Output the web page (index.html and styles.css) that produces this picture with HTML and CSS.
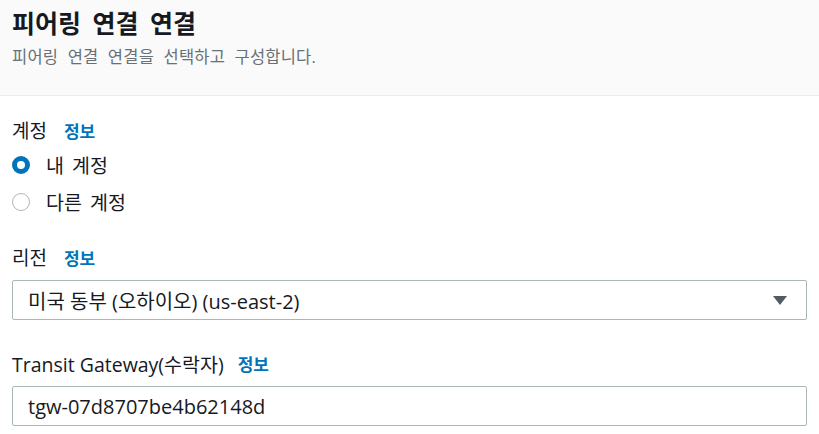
FILE: index.html
```html
<!DOCTYPE html>
<html lang="ko">
<head>
    <meta charset="UTF-8">
    <title>피어링 연결 연결</title>
    <link rel="stylesheet" href="styles.css">
</head>
<body>
<div class="header">
    <h1 class="title">피어링 연결 연결</h1>
    <p class="desc">피어링 연결 연결을 선택하고 구성합니다.</p>
</div>
<div class="main">
    <!--계정-->
    <div class="field field-account">
        <div class="label">계정<a class="info" href="#">정보</a></div>
        <div class="radio-group">
            <label class="radio-row">
                <span class="radio checked"></span>
                <span>내 계정</span>
            </label>
            <label class="radio-row">
                <span class="radio"></span>
                <span>다른 계정</span>
            </label>
        </div>
    </div>

    <!--리전-->
    <div class="field field-region">
        <div class="label">리전<a class="info" href="#">정보</a></div>
        <div class="select">
            <span>미국 동부 (오하이오) (us-east-2)</span>
            <span class="caret"></span>
        </div>
    </div>

    <!--수락자-->
    <div class="field field-tgw">
        <div class="label label-latin">Transit Gateway(수락자)<a class="info" href="#">정보</a></div>
        <div class="input">tgw-07d8707be4b62148d</div>
    </div>
</div>
</body>
</html>
```

FILE: styles.css
```css
body {
    margin: 0;
    font-family: "Open Sans", "Noto Sans CJK KR", sans-serif;
    color: #16191f;
    background: #fff;
}
.header {
    height: 96px;
    background: #fafafa;
    border-bottom: 1px solid #eaeded;
    padding: 0 12px;
    box-sizing: border-box;
}
.title {
    margin: 0;
    padding-top: 7px;
    font-size: 25px;
    line-height: 32px;
    font-weight: bold;
    word-spacing: 5px;
}
.desc {
    margin: 6px 0 0;
    font-size: 16.5px;
    line-height: 24px;
    color: #687078;
    word-spacing: 5px;
    letter-spacing: 0.2px;
}
.main {
    padding: 0 12px;
}
.field {
    display: flex;
    flex-direction: column;
}
.field-account {
    padding-top: 22px;
}
.field-region {
    padding-top: 25px;
}
.field-tgw {
    padding-top: 31px;
}
.label {
    display: flex;
    align-items: center;
    height: 24px;
    font-size: 19px;
}
.label-latin {
    font-size: 19.5px;
}
.info {
    color: #0073bb;
    text-decoration: none;
    font-weight: bold;
    font-size: 17px;
    margin-left: 17px;
}
.label-latin .info {
    margin-left: 14px;
}
.radio-group {
    margin-top: 4px;
}
.radio-row {
    display: flex;
    align-items: center;
    gap: 16px;
    height: 37px;
    font-size: 19.5px;
    word-spacing: 3px;
}
.radio {
    width: 18px;
    height: 18px;
    box-sizing: border-box;
    border: 1.5px solid #aab7b8;
    border-radius: 50%;
}
.radio.checked {
    border: 5px solid #0073bb;
}
.select, .input {
    display: flex;
    align-items: center;
    justify-content: space-between;
    height: 40px;
    margin-top: 11px;
    padding: 0 19px 0 15px;
    border: 1px solid #aab7b8;
    border-radius: 2px;
    font-size: 20px;
    box-sizing: border-box;
}
.caret {
    width: 0;
    height: 0;
    border-left: 7px solid transparent;
    border-right: 7px solid transparent;
    border-top: 9px solid #545b64;
}
```
